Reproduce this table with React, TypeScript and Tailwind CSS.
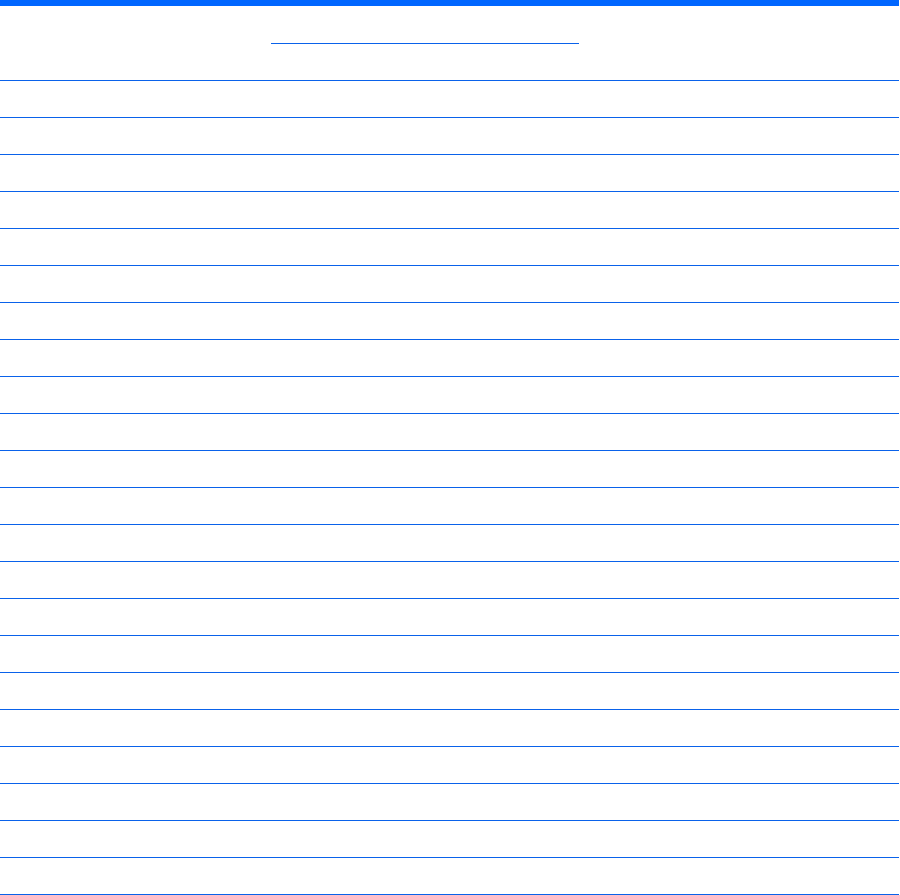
export default function App() {
  const rows = Array.from({ length: 22 });
  return (
    <div className="w-[900px] h-[895px] bg-white overflow-hidden">
      <div className="h-[6px] w-[899px] bg-[#0066ff]" />
      <div className="h-[74px] w-[899px] pt-[37px] pl-[271px]">
        <div className="h-px w-[308px] bg-[#0a62ea]" />
      </div>
      <div className="w-[899px]">
        {rows.map((_, i) => (
          <div key={i} className="h-[37px] border-t border-[#0a62ea]" />
        ))}
        <div className="h-px bg-[#0a62ea]" />
      </div>
    </div>
  );
}
